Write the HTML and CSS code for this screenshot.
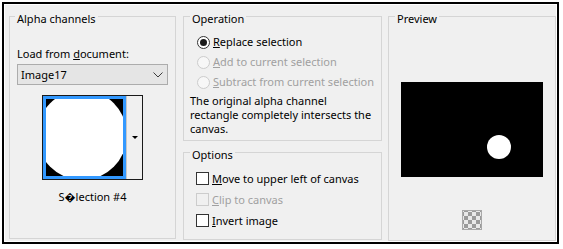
FILE: index.html
```html
<!DOCTYPE html>
<html lang="en">
<head>
    <meta charset="UTF-8">
    <meta name="viewport" content="width=device-width, initial-scale=1.0">
    <title>Load Selection From Alpha Channel</title>
    <link rel="stylesheet" href="styles.css">
</head>
<body>
<div class="dialog">
    <fieldset class="group group-alpha">
        <legend>Alpha channels</legend>
        <div class="field-label">Load from <u>d</u>ocument:</div>
        <div class="select">
            <span>Image17</span>
            <svg class="chevron" width="10" height="6" viewBox="0 0 10 6">
                <polyline points="0.5,0.5 5,5 9.5,0.5" fill="none" stroke="#3c3c3c" stroke-width="1"/>
            </svg>
        </div>
        <div class="thumb-picker">
            <div class="thumb">
                <svg width="77" height="77" viewBox="0 0 77 77">
                    <rect width="77" height="77" fill="#000"/>
                    <circle cx="36" cy="36" r="45" fill="#fff"/>
                </svg>
            </div>
            <div class="thumb-arrow"><span class="caret"></span></div>
        </div>
        <div class="thumb-name">S&#xFFFD;lection #4</div>
    </fieldset>

    <div class="column">
        <fieldset class="group group-operation">
            <legend>Operation</legend>
            <label class="option">
                <span class="radio checked"></span>
                <span><u>R</u>eplace selection</span>
            </label>
            <label class="option disabled">
                <span class="radio"></span>
                <span><u>A</u>dd to current selection</span>
            </label>
            <label class="option disabled">
                <span class="radio"></span>
                <span><u>S</u>ubtract from current selection</span>
            </label>
            <p class="note">The original alpha channel<br>rectangle completely intersects the<br>canvas.</p>
        </fieldset>

        <fieldset class="group group-options">
            <legend>Options</legend>
            <label class="option check-row">
                <span class="checkbox"></span>
                <span><u>M</u>ove to upper left of canvas</span>
            </label>
            <label class="option check-row disabled">
                <span class="checkbox"></span>
                <span><u>C</u>lip to canvas</span>
            </label>
            <label class="option check-row">
                <span class="checkbox"></span>
                <span><u>I</u>nvert image</span>
            </label>
        </fieldset>
    </div>

    <fieldset class="group group-preview">
        <legend>Preview</legend>
        <div class="preview-canvas">
            <svg width="142" height="95" viewBox="0 0 142 95">
                <rect width="142" height="95" fill="#000"/>
                <circle cx="98" cy="65" r="12" fill="#fff"/>
            </svg>
        </div>
        <div class="checker"></div>
    </fieldset>
</div>
</body>
</html>
```

FILE: styles.css
```css
:root {
    --face: #f0f0f0;
    --text: #000;
    --disabled: #a0a0a0;
    --group-line: #d5d5d5;
    --accent: #3399ff;
}

* {
    margin: 0;
    padding: 0;
    box-sizing: border-box;
}

body {
    font-family: "Noto Sans", "DejaVu Sans", sans-serif;
    font-size: 11px;
    line-height: 15px;
    color: var(--text);
    background: #fff;
}

.dialog {
    margin: 2px 0 0 2px;
    width: 557px;
    height: 242px;
    border: 2px solid #000;
    box-shadow: inset 0 0 0 1px #fff;
    background: var(--face);
    padding: 2px 1px 0 5px;
    display: flex;
    align-items: flex-start;
}

/* group boxes */
.group {
    border: 1px solid var(--group-line);
    padding: 0;
    min-width: 0;
}

.group legend {
    margin-left: 6px;
    padding: 4px 2px 0;
    line-height: 17px;
}

.group-alpha {
    width: 167px;
    height: 233px;
    padding: 0 7px;
}

.group-alpha legend {
    margin-left: -2px;
}

.column {
    width: 199px;
    margin-left: 7px;
    display: flex;
    flex-direction: column;
    gap: 1px;
}

.group-operation {
    height: 135px;
}

.group-options {
    height: 98px;
}

.group-preview {
    width: 168px;
    height: 235px;
    margin-left: 6px;
    display: flex;
    flex-direction: column;
    align-items: center;
}

/* alpha channels */
.field-label {
    margin-top: 19px;
}

.select {
    margin-top: 3px;
    height: 21px;
    border: 1px solid #acacac;
    background: #e5e5e5;
    display: flex;
    align-items: center;
    justify-content: space-between;
    padding: 0 4px 0 3px;
    line-height: 19px;
}

.chevron {
    display: block;
}

.thumb-picker {
    margin: 10px auto 0;
    width: 101px;
    height: 85px;
    border: 1px solid #1a1a1a;
    display: flex;
}

.thumb {
    width: 83px;
    height: 83px;
    border: 3px solid var(--accent);
    overflow: hidden;
}

.thumb svg {
    display: block;
}

.thumb-arrow {
    flex: 1;
    display: flex;
    align-items: center;
    justify-content: center;
    border-left: 1px solid #c8c8c8;
}

.caret {
    width: 0;
    height: 0;
    border-left: 3px solid transparent;
    border-right: 3px solid transparent;
    border-top: 3px solid #000;
}

.thumb-name {
    margin-top: 9px;
    text-align: center;
}

/* radios and checkboxes */
.option {
    display: flex;
    align-items: center;
    gap: 3px;
    height: 20px;
    line-height: 20px;
    padding-left: 13px;
}

.group-operation .option:first-of-type {
    margin-top: 5px;
}

.option.disabled {
    color: var(--disabled);
}

.radio {
    width: 13px;
    height: 13px;
    border: 1px solid #333;
    border-radius: 50%;
    background: #fff;
    display: flex;
    align-items: center;
    justify-content: center;
}

.radio.checked::after {
    content: "";
    width: 7px;
    height: 7px;
    border-radius: 50%;
    background: #1a1a1a;
}

.disabled .radio {
    border-color: #cccccc;
    background: #f7f7f7;
}

.check-row {
    height: 21px;
    line-height: 21px;
    padding-left: 12px;
}

.group-options .check-row:first-of-type {
    margin-top: 5px;
}

.checkbox {
    width: 13px;
    height: 13px;
    border: 1px solid #333;
    background: #fff;
}

.disabled .checkbox {
    border-color: #cccccc;
    background: var(--face);
}

.note {
    margin: 2px 0 0 6px;
    line-height: 14px;
}

/* preview */
.preview-canvas {
    margin-top: 55px;
}

.preview-canvas svg {
    display: block;
}

.checker {
    margin-top: 33px;
    width: 20px;
    height: 20px;
    border: 1px solid #a8a8a8;
    background-color: #e8e8e8;
    background-image: conic-gradient(#9a9a9a 25%, transparent 0 50%, #9a9a9a 0 75%, transparent 0);
    background-size: 8px 8px;
    background-position: 1px 1px;
}
```
